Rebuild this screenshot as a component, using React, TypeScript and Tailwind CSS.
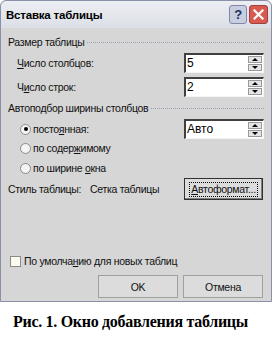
import React from "react";

function Spin({ value }: { value: string }) {
  return (
    <div className="flex h-[20px] w-[80px] items-stretch border-t-2 border-l-2 border-t-[#404040] border-l-[#404040] border-b border-r border-b-[#f4f4f4] border-r-[#f4f4f4] bg-white">
      <span className="flex-1 pl-[1px] text-[12px] leading-[17px] tracking-normal text-black">{value}</span>
      <div className="flex w-[15px] flex-col gap-[1px] py-[1px] pr-[1px]">
        <div className="flex flex-1 items-center justify-center border border-[#9a9a9a] bg-[#e4e4e4]">
          <span className="h-0 w-0 border-x-[3px] border-b-[3px] border-x-transparent border-b-black" />
        </div>
        <div className="flex flex-1 items-center justify-center border border-[#9a9a9a] bg-[#e4e4e4]">
          <span className="h-0 w-0 border-x-[3px] border-t-[3px] border-x-transparent border-t-black" />
        </div>
      </div>
    </div>
  );
}

function Group({ title }: { title: string }) {
  return (
    <div className="flex h-[14px] items-center gap-[3px]">
      <span>{title}</span>
      <div className="h-0 flex-1 border-t border-dotted border-[#9aa0b0]" />
    </div>
  );
}

function Radio({ label, checked }: { label: React.ReactNode; checked?: boolean }) {
  return (
    <div className="flex h-[14px] items-center gap-[2px]">
      <span className="flex h-[11px] w-[11px] items-center justify-center rounded-full border border-[#8a8a8a] bg-[#f4f4f4]">
        {checked && <span className="h-[4px] w-[4px] rounded-full bg-black" />}
      </span>
      <span>{label}</span>
    </div>
  );
}

function Btn({ children }: { children: React.ReactNode }) {
  return (
    <div className="flex h-[23px] w-[80px] items-center justify-center border border-[#a0a0a0] bg-[#dcdcdc]">
      {children}
    </div>
  );
}

export default function App() {
  return (
    <div className="h-[361px] w-[274px] bg-white" style={{ fontFamily: '"Liberation Sans", Arial, sans-serif' }}>
      <div className="flex h-[302px] w-[272px] flex-col rounded-t-[6px] border border-[#8a90a8] bg-[#d6d6d6] text-[10.5px] leading-[14px] tracking-[-0.3px] text-[#111]">
        <div className="flex h-[27px] shrink-0 items-center justify-between rounded-t-[6px] bg-gradient-to-b from-[#eceef2] to-[#dcdfe6] pl-[5px] pr-[3px]">
          <span className="text-[11.5px] font-bold tracking-[-0.2px] text-black">Вставка таблицы</span>
          <div className="flex gap-[2px]">
            <div className="flex h-[19px] w-[18px] items-center justify-center rounded-[3px] border border-[#8088a8] bg-[#c8cde0] text-[13px] font-bold text-[#203060]">?</div>
            <div className="flex h-[19px] w-[19px] items-center justify-center rounded-[3px] border border-[#a04040] bg-[#d85a50]">
              <svg width="11" height="11" viewBox="0 0 11 11">
                <path d="M1.5 1.5 L9.5 9.5 M9.5 1.5 L1.5 9.5" stroke="white" strokeWidth="2.2" strokeLinecap="square" />
              </svg>
            </div>
          </div>
        </div>
        <div className="flex flex-1 flex-col px-[7px] pt-[7px]">
          <Group title="Размер таблицы" />
          <div className="mt-[4px] flex flex-col gap-[4px] pl-[9px]">
            <div className="flex items-center justify-between">
              <span><u>Ч</u>исло столбцов:</span>
              <Spin value="5" />
            </div>
            <div className="flex items-center justify-between">
              <span>Ч<u>и</u>сло строк:</span>
              <Spin value="2" />
            </div>
          </div>
          <div className="mt-[4px]">
            <Group title="Автоподбор ширины столбцов" />
          </div>
          <div className="mt-[4px] flex flex-col pl-[12px]">
            <div className="flex items-center justify-between">
              <Radio checked label={<>посто<u>я</u>нная:</>} />
              <Spin value="Авто" />
            </div>
            <div className="mt-[2px] flex flex-col gap-[6px]">
              <Radio label={<>по содер<u>ж</u>имому</>} />
              <Radio label={<>по ширине <u>о</u>кна</>} />
            </div>
          </div>
          <div className="mt-[3px] flex items-center">
            <span className="w-[82px] whitespace-nowrap">Стиль таблицы:</span>
            <span className="flex-1 whitespace-nowrap">Сетка таблицы</span>
            <div className="mr-[1px] flex h-[22px] w-[79px] items-center justify-center border border-[#303030] bg-[#dcdcdc] shadow-[inset_-1px_-1px_0_#808080]">
              <span className="border border-dotted border-black px-[1px] leading-[13px]"><u>А</u>втоформат...</span>
            </div>
          </div>
          <div className="mt-[54px] flex h-[14px] items-center gap-[3px] pl-[2px]">
            <span className="h-[11px] w-[11px] border border-[#8a8a8a] bg-[#fbfbf0]" />
            <span className="whitespace-nowrap">По умолча<u>н</u>ию для новых таблиц</span>
          </div>
          <div className="mt-[7px] flex justify-end gap-[5px] pr-[1px]">
            <Btn>OK</Btn>
            <Btn>Отмена</Btn>
          </div>
        </div>
      </div>
      <div
        className="mt-[11px] whitespace-nowrap pl-[13px] text-[16px] font-bold leading-[18px] tracking-[-0.3px] text-black"
        style={{ fontFamily: '"Liberation Serif", "Times New Roman", serif' }}
      >
        Рис. 1. Окно добавления таблицы
      </div>
    </div>
  );
}
